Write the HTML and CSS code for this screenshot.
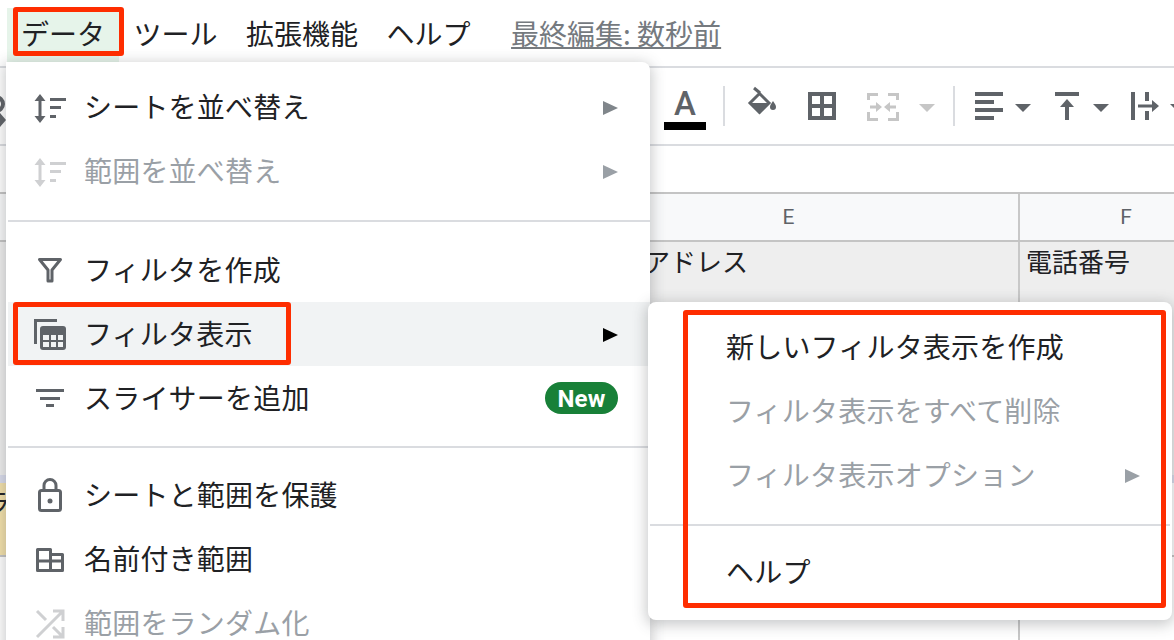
FILE: index.html
```html
<!DOCTYPE html>
<html lang="ja">
<head>
    <meta charset="UTF-8">
    <title>スプレッドシート データメニュー</title>
    <link rel="stylesheet" href="styles.css">
</head>
<body>
<div class="app">
    <!-- メニューバー -->
    <div class="menubar">
        <div class="menubar-item active">データ</div>
        <div class="menubar-item">ツール</div>
        <div class="menubar-item">拡張機能</div>
        <div class="menubar-item">ヘルプ</div>
        <a class="last-edit">最終編集: 数秒前</a>
    </div>

    <!-- ツールバー -->
    <div class="toolbar">
        <svg class="tool t-search" width="30" height="32" viewBox="0 0 30 32"><circle cx="20" cy="14" r="7" fill="none" stroke="#5f6368" stroke-width="4"/><path d="M24 23l6 7-6 7z" fill="#5f6368"/></svg>
        <div class="tool t-color"><span class="color-a">A</span><span class="color-bar"></span></div>
        <span class="tool-sep s-1"></span>
        <svg class="tool t-fill" width="28" height="32" viewBox="0 0 28 32"><path d="M6 -2l6 5" fill="none" stroke="#5f6368" stroke-width="3"/><path d="M11.500 3.500L21 13 11.500 22.500 2 13z" fill="none" stroke="#5f6368" stroke-width="3"/><path d="M1 13h21L11.500 24z" fill="#5f6368"/><path d="M25 11c-2 3-3 4-3 6a3 3 0 0 0 6 0c0-2-1-3-3-6z" fill="#5f6368"/></svg>
        <svg class="tool t-borders" width="28" height="32" viewBox="0 0 28 32"><path d="M2 4h24v24H2zM14 4v24M2 16h24" fill="none" stroke="#5f6368" stroke-width="4"/></svg>
        <svg class="tool t-merge" width="32" height="32" viewBox="0 0 32 32"><g fill="none" stroke="#c6c6c6" stroke-width="3"><path d="M11 4.500H1.500V10M21 4.500h9.500V10M1.500 22v7.500H11M30.500 22v7.500H21"/><path d="M3 17h7M29 17h-7"/></g><path d="M9 12l6 5-6 5zM23 12l-6 5 6 5z" fill="#c6c6c6"/></svg>
        <svg class="tool t-caret1" width="16" height="32" viewBox="0 0 16 32"><path d="M0 14h16l-8 8z" fill="#c6c6c6"/></svg>
        <span class="tool-sep s-2"></span>
        <svg class="tool t-align" width="28" height="32" viewBox="0 0 28 32"><path d="M0 2h28v4H0zM0 10h19v4H0zM0 18h28v4H0zM0 26h19v4H0z" fill="#5f6368"/></svg>
        <svg class="tool t-caret2" width="16" height="32" viewBox="0 0 16 32"><path d="M0 14h16l-8 8z" fill="#5f6368"/></svg>
        <svg class="tool t-valign" width="24" height="32" viewBox="0 0 24 32"><path d="M0 2h24v4H0zM12 9l7 8h-5v13h-4V17H5z" fill="#5f6368"/></svg>
        <svg class="tool t-caret3" width="16" height="32" viewBox="0 0 16 32"><path d="M0 14h16l-8 8z" fill="#5f6368"/></svg>
        <svg class="tool t-wrap" width="28" height="32" viewBox="0 0 28 32"><path d="M0 2h4v28H0zM14 2h4v9h-4zM14 21h4v9h-4zM7 14.500h14V10l7 6-7 6v-4.500H7z" fill="#5f6368"/></svg>
        <svg class="tool t-caret4" width="16" height="32" viewBox="0 0 16 32"><path d="M0 14h16l-8 8z" fill="#5f6368"/></svg>
    </div>

    <div class="formula-bar"></div>

    <!-- シート -->
    <div class="sheet">
        <div class="sheet-row col-heads">
            <div class="cell"></div>
            <div class="cell">E</div>
            <div class="cell">F</div>
        </div>
        <div class="sheet-row row-title">
            <div class="cell"></div>
            <div class="cell address">アドレス</div>
            <div class="cell">電話番号</div>
        </div>
        <div class="sheet-row row-band">
            <div class="cell"></div>
            <div class="cell"></div>
            <div class="cell"></div>
        </div>
        <div class="sheet-row row-note">
            <div class="cell note">ラ</div>
            <div class="cell"></div>
            <div class="cell"></div>
        </div>
        <div class="sheet-row row-plain">
            <div class="cell"></div>
            <div class="cell"></div>
            <div class="cell"></div>
        </div>
    </div>

    <!-- データメニュー -->
    <div class="menu data-menu">
        <div class="menu-item">
            <svg class="menu-icon" width="32" height="32" viewBox="0 0 32 32"><path d="M4.500 8h3v18h-3zM6 3l5.500 7h-11zM6 32l-5.500-7h11zM16 7h16v3H16zM16 15h11v3H16zM16 24h6v3h-6z" fill="#5f6368"/></svg>
            <span>シートを並べ替え</span>
            <i class="arrow"></i>
        </div>
        <div class="menu-item disabled">
            <svg class="menu-icon" width="32" height="32" viewBox="0 0 32 32"><path d="M4.500 8h3v18h-3zM6 3l5.500 7h-11zM6 32l-5.500-7h11zM16 7h16v3H16zM16 15h11v3H16zM16 24h6v3h-6z" fill="#cfd0d2"/></svg>
            <span>範囲を並べ替え</span>
            <i class="arrow"></i>
        </div>
        <div class="menu-sep"></div>
        <div class="menu-item">
            <svg class="menu-icon" width="32" height="32" viewBox="0 0 32 32"><path d="M5.500 5.500h21L18 16v11h-4V16z" fill="none" stroke="#5f6368" stroke-width="3" stroke-linejoin="round"/></svg>
            <span>フィルタを作成</span>
        </div>
        <div class="menu-item hover">
            <svg class="menu-icon" width="32" height="32" viewBox="0 0 32 32"><path d="M0 1h23v3H3v22H0z" fill="#5f6368"/><path d="M9 8h20a3 3 0 0 1 3 3v18a3 3 0 0 1-3 3H9a3 3 0 0 1-3-3V11a3 3 0 0 1 3-3z" fill="#5f6368"/><path d="M9 17h6v5H9zM17 17h5v5h-5zM24 17h5v5h-5zM9 24h6v5H9zM17 24h5v5h-5zM24 24h5v5h-5z" fill="#f1f3f4"/></svg>
            <span>フィルタ表示</span>
            <i class="arrow"></i>
        </div>
        <div class="menu-item">
            <svg class="menu-icon" width="32" height="32" viewBox="0 0 32 32"><path d="M2 7h28v3H2zM6 15h20v3H6zM12 22h8v3h-8z" fill="#5f6368"/></svg>
            <span>スライサーを追加</span>
            <b class="badge">New</b>
        </div>
        <div class="menu-sep sep-lower"></div>
        <div class="menu-item">
            <svg class="menu-icon" width="32" height="32" viewBox="0 0 32 32"><rect x="5.500" y="11.500" width="21" height="20" rx="2" fill="none" stroke="#5f6368" stroke-width="3"/><path d="M10 11V6.500a6 6 0 0 1 12 0V11" fill="none" stroke="#5f6368" stroke-width="3"/><circle cx="16" cy="22" r="2.500" fill="#5f6368"/></svg>
            <span>シートと範囲を保護</span>
        </div>
        <div class="menu-item">
            <svg class="menu-icon" width="32" height="32" viewBox="0 0 32 32"><path d="M3.500 6.500h13v5h12v16h-25zM3.500 18h25M16.500 6.500v21" fill="none" stroke="#5f6368" stroke-width="3" stroke-linejoin="round"/></svg>
            <span>名前付き範囲</span>
        </div>
        <div class="menu-item disabled">
            <svg class="menu-icon" width="32" height="32" viewBox="0 0 32 32"><g fill="none" stroke="#cfd0d2" stroke-width="3"><path d="M3 30L28 5M19 4h10v10M3 4l9 9M19 20l9 9M19 30h10V20"/></g></svg>
            <span>範囲をランダム化</span>
        </div>
    </div>

    <!-- サブメニュー -->
    <div class="menu sub-menu">
        <div class="menu-item"><span>新しいフィルタ表示を作成</span></div>
        <div class="menu-item disabled"><span>フィルタ表示をすべて削除</span></div>
        <div class="menu-item disabled"><span>フィルタ表示オプション</span><i class="arrow"></i></div>
        <div class="menu-sep"></div>
        <div class="menu-item"><span>ヘルプ</span></div>
    </div>

    <!-- 赤枠 -->
    <div class="mark mark-data"></div>
    <div class="mark mark-filter"></div>
    <div class="mark mark-sub"></div>
</div>
</body>
</html>
```

FILE: styles.css
```css
* {
    box-sizing: border-box;
}

body {
    margin: 0;
    background: white;
    font-family: "Noto Sans CJK JP", "Noto Sans", sans-serif;
    color: #202124;
}

.app {
    position: relative;
    width: 1174px;
    height: 640px;
    overflow: hidden;
    display: flex;
    flex-direction: column;
}

/* menu bar */
.menubar {
    height: 68px;
    flex: none;
    display: flex;
    align-items: flex-start;
    gap: 0.5px;
    padding: 8px 0 0 7px;
    border-bottom: 2px solid #dadce0;
}

.menubar-item {
    height: 54px;
    padding: 0 14px;
    font-size: 28px;
    line-height: 50px;
}

.menubar-item.active {
    background-color: #e6f4ea;
}

.last-edit {
    margin-left: 26px;
    font-size: 28px;
    line-height: 50px;
    color: #757a7f;
    text-decoration: underline;
}

/* toolbar */
.toolbar {
    height: 78px;
    flex: none;
    display: flex;
    align-items: center;
    overflow: hidden;
    border-bottom: 2px solid #dadce0;
}

.tool {
    flex: none;
    overflow: visible;
}

.tool-sep {
    flex: none;
    width: 2px;
    height: 40px;
    background-color: #dadce0;
}

.t-search { margin-left: -24px; }
.t-color {
    margin: 7px 0 0 658px;
    width: 42px;
    height: 40px;
    display: flex;
    flex-direction: column;
    align-items: center;
}
.color-a {
    height: 32px;
    font-family: Roboto, sans-serif;
    font-size: 33px;
    font-weight: 500;
    line-height: 27px;
    color: #5f6368;
}
.color-bar {
    width: 42px;
    height: 8px;
    background-color: black;
}
.s-1 { margin-left: 17px; }
.t-fill { margin-left: 23px; }
.t-borders { margin-left: 32px; }
.t-merge { margin-left: 31px; }
.t-caret1 { margin-left: 20px; }
.s-2 { margin-left: 18px; }
.t-align { margin-left: 20px; }
.t-caret2 { margin-left: 12px; }
.t-valign { margin-left: 24px; }
.t-caret3 { margin-left: 14px; }
.t-wrap { margin-left: 22px; }
.t-caret4 { margin-left: 11px; }

.formula-bar {
    height: 48px;
    flex: none;
    border-bottom: 2px solid #c4c4c4;
}

/* sheet */
.sheet {
    flex: 1;
    display: flex;
    flex-direction: column;
}

.sheet-row {
    flex: none;
    display: grid;
    grid-template-columns: 559px 461px 214px;
    border-bottom: 2px solid #c4c4c4;
}

.cell {
    border-right: 2px solid #c8c8c8;
    overflow: hidden;
    white-space: nowrap;
}

.col-heads {
    height: 48px;
    background-color: #f8f9fa;
    font-family: Roboto, sans-serif;
    font-size: 21px;
    line-height: 46px;
    color: #5f6368;
    text-align: center;
}

.row-title {
    height: 233px;
    background-color: #eeeeee;
    font-size: 26px;
    line-height: 38px;
    border-bottom: none;
}

.row-title .cell {
    padding: 0 0 0 6px;
}

.row-title .address {
    padding-left: 85px;
}

.row-band {
    height: 8px;
    background-color: #d9dcec;
    border-bottom: none;
}

.row-note {
    height: 74px;
    font-size: 26px;
    line-height: 38px;
}

.row-note .note {
    background-color: #f3e1ab;
    text-indent: -16px;
}

.row-plain {
    height: 100px;
    border-bottom: none;
}

/* menus */
.menu {
    position: absolute;
    background: white;
    border-radius: 8px;
    box-shadow: 0 3px 14px 2px rgba(60, 64, 67, 0.28);
    font-size: 28px;
    letter-spacing: 0.2px;
}

.data-menu {
    left: 6px;
    top: 62px;
    width: 644px;
    height: 600px;
    padding: 13px 0 0 2px;
    border-top-left-radius: 0;
}

.sub-menu {
    left: 648px;
    top: 302px;
    width: 524px;
    height: 318px;
    padding: 13px 0 0 2px;
}

.menu-item {
    height: 64px;
    display: flex;
    align-items: center;
    padding: 0 32px 0 26px;
    line-height: 60px;
    white-space: nowrap;
}

/* テキストだけ1px上げる */
.menu-item span {
    margin-bottom: 2px;
}

.menu-icon {
    flex: none;
    margin-right: 18px;
    overflow: visible;
}

.sub-menu .menu-item {
    padding-left: 76px;
}

.menu-item.disabled {
    color: #9aa0a6;
}

.menu-item.hover {
    background-color: #f1f3f4;
}

.arrow {
    margin: 2px 0 0 auto;
    width: 0;
    height: 0;
    border-style: solid;
    border-width: 7px 0 7px 15px;
    border-color: transparent transparent transparent #80868b;
}

.menu-item.hover .arrow {
    border-left-color: black;
}

.menu-item.disabled .arrow {
    border-left-color: #9aa0a6;
}

.menu-sep {
    height: 2px;
    margin: 17px 0 16px;
    background-color: #dadce0;
}

.sep-lower {
    margin: 16px 0 15px;
}

.sub-menu .menu-sep {
    margin: 17px 2px 14px 0;
}

.badge {
    margin-left: auto;
    width: 73px;
    height: 32px;
    border-radius: 16px;
    background-color: #188038;
    color: white;
    font-family: Roboto, sans-serif;
    font-size: 24px;
    font-weight: 700;
    line-height: 34px;
    text-align: center;
}

/* red annotation boxes */
.mark {
    position: absolute;
    border: 5px solid #fe2d00;
    border-radius: 3px;
}

.mark-data {
    left: 13px;
    top: 7px;
    width: 111px;
    height: 49px;
}

.mark-filter {
    left: 13px;
    top: 302px;
    width: 278px;
    height: 63px;
}

.mark-sub {
    left: 683px;
    top: 310px;
    width: 483px;
    height: 298px;
}
```
